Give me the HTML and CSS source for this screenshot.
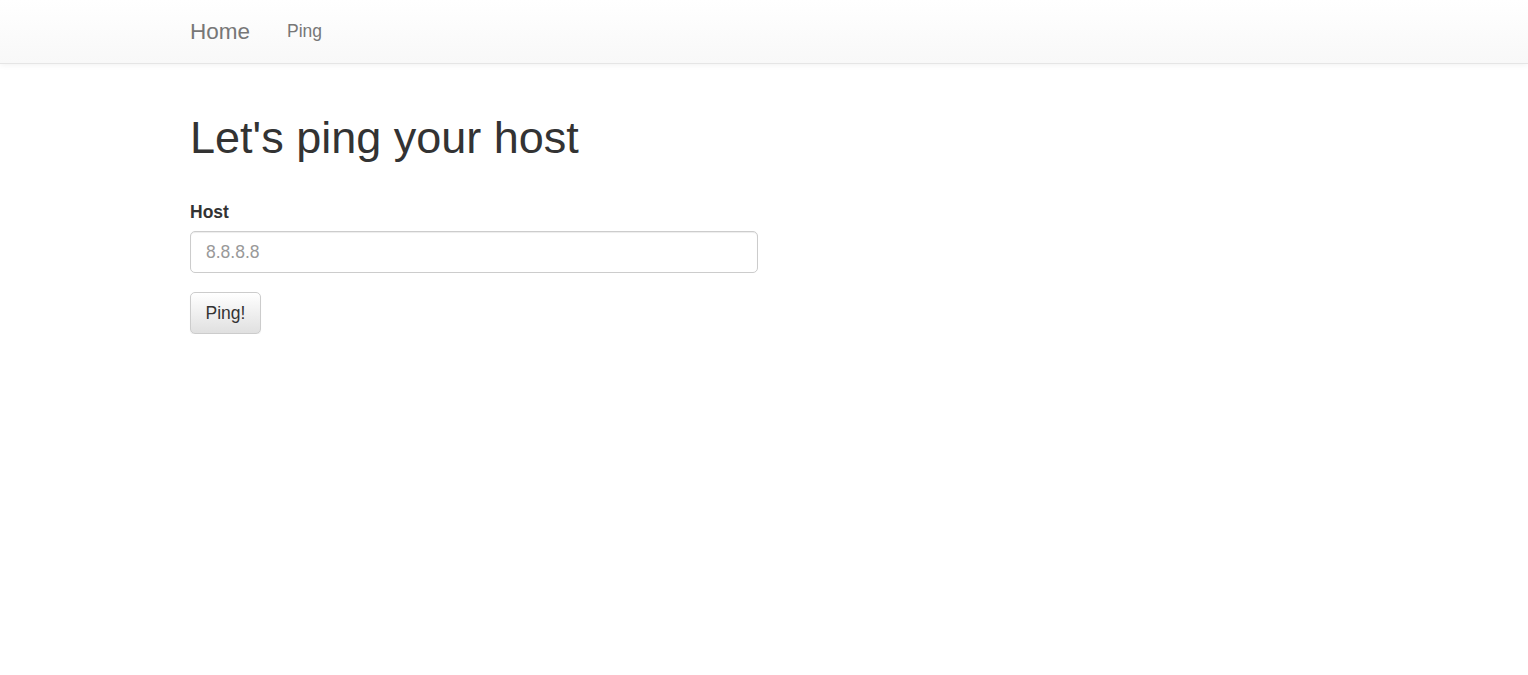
FILE: index.html
```html
<!DOCTYPE html>
<html lang="en">
<head>
<meta charset="utf-8">
<title>Ping</title>
<link rel="stylesheet" href="styles.css">
</head>
<body>
<nav class="navbar">
  <div class="container nav-inner">
    <a class="brand" href="#">Home</a>
    <a class="nav-link" href="#">Ping</a>
  </div>
</nav>
<main class="container">
  <h1 class="title">Let's ping your host</h1>
  <form class="form">
    <div class="form-group">
      <label class="label" for="host">Host</label>
      <input class="input" id="host" type="text" placeholder="8.8.8.8">
    </div>
    <button class="btn" type="button">Ping!</button>
  </form>
</main>
</body>
</html>
```

FILE: styles.css
```css
* { box-sizing: border-box; }
html, body { margin: 0; padding: 0; background: #fff; }
body {
  font-family: "Liberation Sans", Arial, Helvetica, sans-serif;
  font-size: 17.5px;
  line-height: 25px;
  color: #333;
}
.container {
  padding-left: 190px;
  padding-right: 190px;
}
.navbar {
  height: 64px;
  background: linear-gradient(to bottom, #ffffff 0%, #f8f8f8 100%);
  border-bottom: 1px solid #e5e5e5;
  box-shadow: inset 0 1px 0 rgba(255,255,255,.15), 0 1px 6px rgba(0,0,0,.06);
}
.nav-inner {
  display: flex;
  align-items: center;
  height: 63px;
}
.brand {
  font-size: 22.5px;
  line-height: 25px;
  color: #777;
  text-decoration: none;
}
.nav-link {
  margin-left: 37px;
  font-size: 17.5px;
  line-height: 25px;
  color: #777;
  text-decoration: none;
}
.title {
  margin: 49px 0 0;
  font-size: 45px;
  line-height: 49.5px;
  font-weight: 500;
  color: #333;
}
.form {
  margin-top: 37px;
  width: 568px;
}
.form-group { margin-bottom: 19px; }
.label {
  display: block;
  font-weight: bold;
  font-size: 17.5px;
  line-height: 25px;
  margin-bottom: 6px;
}
.input {
  display: block;
  width: 100%;
  height: 42px;
  padding: 8px 15px 6px;
  font-family: inherit;
  font-size: 17.5px;
  line-height: 25px;
  color: #555;
  border: 1px solid #ccc;
  border-radius: 5px;
  box-shadow: inset 0 1px 1px rgba(0,0,0,.075);
  outline: none;
}
.input::placeholder { color: #999; }
.btn {
  display: block;
  height: 42px;
  padding: 8px 14.5px 6px;
  font-family: inherit;
  font-size: 17.5px;
  line-height: 25px;
  color: #333;
  background: linear-gradient(to bottom, #ffffff 0%, #e0e0e0 100%);
  border: 1px solid #ccc;
  border-radius: 5px;
  box-shadow: inset 0 1px 0 rgba(255,255,255,.15), 0 1px 1px rgba(0,0,0,.075);
}
```
